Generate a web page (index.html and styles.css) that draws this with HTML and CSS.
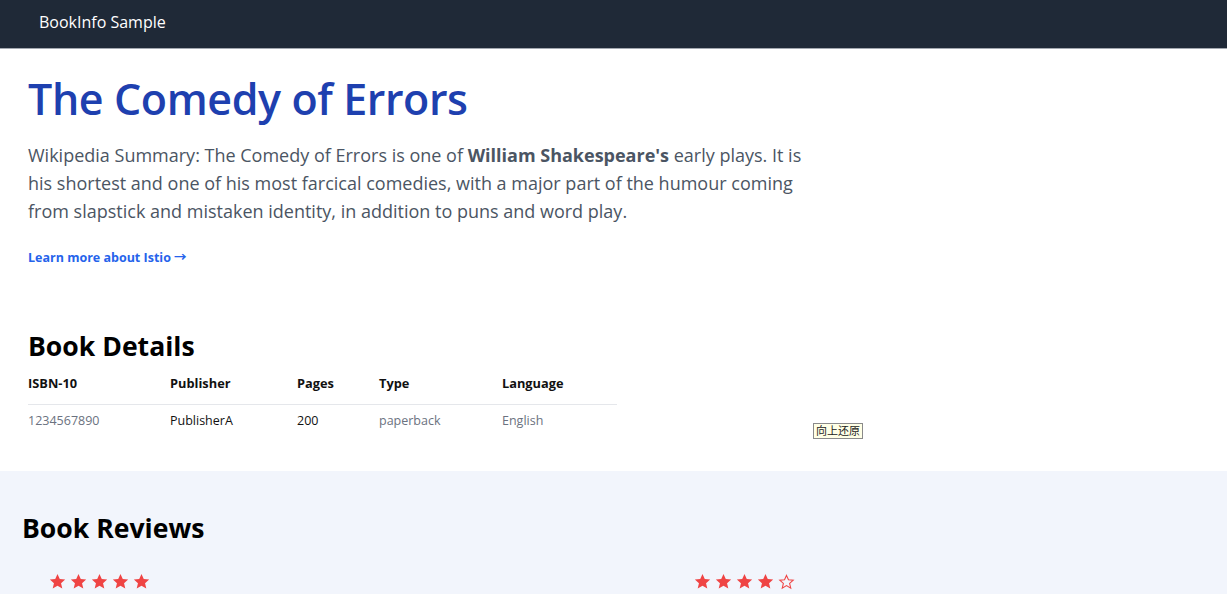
FILE: index.html
```html
<!DOCTYPE html>
<html lang="en">
<head>
<meta charset="utf-8">
<title>BookInfo Sample</title>
<link rel="stylesheet" href="styles.css">
</head>
<body>
<nav class="navbar"><span class="brand">BookInfo Sample</span></nav>
<main>
  <section class="hero">
    <h1 class="title">The Comedy of Errors</h1>
    <p class="summary">Wikipedia Summary: The Comedy of Errors is one of <b>William Shakespeare's</b> early plays. It is his shortest and one of his most farcical comedies, with a major part of the humour coming from slapstick and mistaken identity, in addition to puns and word play.</p>
    <a class="learn" href="#">Learn more about Istio →</a>
  </section>
  <section class="details">
    <h2 class="h2">Book Details</h2>
    <table class="table">
      <thead>
        <tr><th class="c1">ISBN-10</th><th class="c2">Publisher</th><th class="c3">Pages</th><th class="c4">Type</th><th class="c5">Language</th></tr>
      </thead>
      <tbody>
        <tr><td class="muted">1234567890</td><td>PublisherA</td><td>200</td><td class="muted">paperback</td><td class="muted">English</td></tr>
      </tbody>
    </table>
  </section>
  <section class="reviews">
    <h2 class="h2">Book Reviews</h2>
    <div class="rev-grid">
      <div class="stars">
        <svg class="star" viewBox="0 0 24 24"><path d="M12 1.5l3.2 7 7.6.7-5.8 5.1 1.8 7.5L12 17.9l-6.8 3.9 1.8-7.5-5.8-5.1 7.6-.7z"/></svg>
        <svg class="star" viewBox="0 0 24 24"><path d="M12 1.5l3.2 7 7.6.7-5.8 5.1 1.8 7.5L12 17.9l-6.8 3.9 1.8-7.5-5.8-5.1 7.6-.7z"/></svg>
        <svg class="star" viewBox="0 0 24 24"><path d="M12 1.5l3.2 7 7.6.7-5.8 5.1 1.8 7.5L12 17.9l-6.8 3.9 1.8-7.5-5.8-5.1 7.6-.7z"/></svg>
        <svg class="star" viewBox="0 0 24 24"><path d="M12 1.5l3.2 7 7.6.7-5.8 5.1 1.8 7.5L12 17.9l-6.8 3.9 1.8-7.5-5.8-5.1 7.6-.7z"/></svg>
        <svg class="star" viewBox="0 0 24 24"><path d="M12 1.5l3.2 7 7.6.7-5.8 5.1 1.8 7.5L12 17.9l-6.8 3.9 1.8-7.5-5.8-5.1 7.6-.7z"/></svg>
      </div>
      <div class="stars">
        <svg class="star" viewBox="0 0 24 24"><path d="M12 1.5l3.2 7 7.6.7-5.8 5.1 1.8 7.5L12 17.9l-6.8 3.9 1.8-7.5-5.8-5.1 7.6-.7z"/></svg>
        <svg class="star" viewBox="0 0 24 24"><path d="M12 1.5l3.2 7 7.6.7-5.8 5.1 1.8 7.5L12 17.9l-6.8 3.9 1.8-7.5-5.8-5.1 7.6-.7z"/></svg>
        <svg class="star" viewBox="0 0 24 24"><path d="M12 1.5l3.2 7 7.6.7-5.8 5.1 1.8 7.5L12 17.9l-6.8 3.9 1.8-7.5-5.8-5.1 7.6-.7z"/></svg>
        <svg class="star" viewBox="0 0 24 24"><path d="M12 1.5l3.2 7 7.6.7-5.8 5.1 1.8 7.5L12 17.9l-6.8 3.9 1.8-7.5-5.8-5.1 7.6-.7z"/></svg>
        <svg class="star star-empty" viewBox="0 0 24 24"><path d="M12 3.4l2.8 6.2 6.7.6-5.1 4.5 1.6 6.6L12 17.8l-6 3.5 1.6-6.6-5.1-4.5 6.7-.6z"/></svg>
      </div>
    </div>
  </section>
</main>
<span class="tooltip">向上还原</span>
</body>
</html>
```
FILE: styles.css
```css
* { box-sizing: border-box; }
html, body { margin: 0; padding: 0; }
body {
  font-family: "Open Sans", "Noto Sans CJK SC", sans-serif;
  background: #fff;
  color: #111;
  overflow: hidden;
}
.navbar {
  height: 49px;
  background: #1f2937;
  border-bottom: 1px solid #a3a8b0;
  display: flex;
  align-items: center;
  padding: 0 0 4px 39px;
}
.brand { color: #fff; font-size: 16px; }
.hero { padding: 22px 28px 0; }
.title {
  margin: 0;
  font-size: 43px;
  font-weight: 600;
  color: #1e40af;
  line-height: 56px;
  letter-spacing: -0.4px;
}
.summary {
  margin: 14px 0 0;
  width: 785px;
  font-size: 18px;
  line-height: 28px;
  color: #4b5563;
}
.summary b { font-weight: 700; }
.learn {
  display: inline-block;
  margin-top: 22px;
  font-size: 12.5px;
  font-weight: 700;
  color: #2563eb;
  text-decoration: none;
}
.details { padding: 61px 28px 35px; }
.h2 { margin: 0; font-size: 26.6px; font-weight: 700; color: #000; line-height: 36px; }
.table { border-collapse: collapse; margin-top: 4px; width: 589px; }
.table th { text-align: left; font-size: 12.8px; font-weight: 700; padding: 6px 0 12px; border-bottom: 1px solid #e5e7eb; }
.table td { padding: 7px 0; font-size: 12.5px; color: #111; }
.table td.muted { color: #6b7280; }
.c1 { width: 142px; } .c2 { width: 127px; } .c3 { width: 82px; } .c4 { width: 123px; }
.tooltip {
  position: absolute;
  left: 813px; top: 423px;
  font-size: 11px;
  padding: 0 2px;
  background: #ffffe6;
  border: 1px solid #8a8a8a;
  color: #222;
  line-height: 14px;
}
.reviews { background: #f2f5fc; padding: 39px 22px 40px; min-height: 200px; }
.rev-grid { display: grid; grid-template-columns: 645px 1fr; padding: 27px 0 0 27px; }
.stars { display: flex; gap: 4px; }
.star { width: 17px; height: 17px; fill: #ef4444; }
.star-empty { fill: none; stroke: #ef4444; stroke-width: 1.5; }
```
